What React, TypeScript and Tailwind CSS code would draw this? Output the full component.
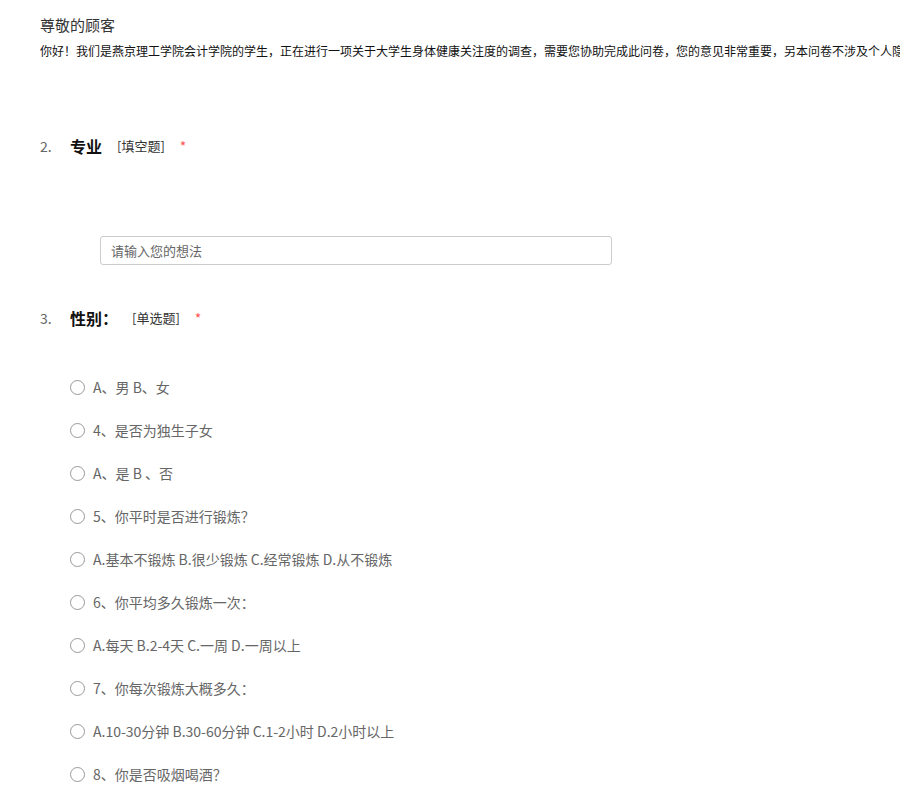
import React from 'react';

const font = { fontFamily: '"Microsoft YaHei", "Noto Sans CJK SC", "Noto Sans", sans-serif' };

const options = [
  'A、男 B、女',
  '4、是否为独生子女',
  'A、是 B 、否',
  '5、你平时是否进行锻炼？',
  'A.基本不锻炼 B.很少锻炼 C.经常锻炼 D.从不锻炼',
  '6、你平均多久锻炼一次：',
  'A.每天 B.2-4天 C.一周 D.一周以上',
  '7、你每次锻炼大概多久：',
  'A.10-30分钟 B.30-60分钟 C.1-2小时 D.2小时以上',
  '8、你是否吸烟喝酒？',
];

const QuestionTitle: React.FC<{ num: string; title: string; type: string; gap: string }> = ({ num, title, type, gap }) => (
  <div className="flex items-center h-[24px] leading-[24px]">
    <span className="w-[30px] text-[14px] text-[#666]">{num}</span>
    <span className="text-[16px] font-bold text-[#111]">{title}</span>
    <span className={`text-[13px] text-[#333] ${gap}`}>{type}</span>
    <span className="text-[14px] text-[#f55] ml-[15px]">*</span>
  </div>
);

export default function App() {
  return (
    <div className="w-[900px] h-[800px] overflow-hidden bg-white pl-[40px]" style={font}>
      <div className="pt-[15px] text-[15px] leading-[20px] text-[#333]">尊敬的顾客</div>
      <div className="mt-[6px] text-[12px] leading-[20px] text-[#111] whitespace-nowrap overflow-hidden">
        你好！我们是燕京理工学院会计学院的学生，正在进行一项关于大学生身体健康关注度的调查，需要您协助完成此问卷，您的意见非常重要，另本问卷不涉及个人隐私，请放心填写。谢谢！
      </div>

      <div className="mt-[73px]">
        <QuestionTitle num="2." title="专业" type="[填空题]" gap="ml-[15px]" />
      </div>
      <div className="mt-[78px] ml-[60px] w-[512px] h-[29px] border border-[#ccc] rounded-[3px] flex items-center px-[10px] text-[13px] text-[#666]">
        请输入您的想法
      </div>

      <div className="mt-[41px]">
        <QuestionTitle num="3." title="性别：" type="[单选题]" gap="ml-[14px]" />
      </div>

      <div className="mt-[47px] ml-[30px] flex flex-col gap-[23px]">
        {options.map((o) => (
          <div key={o} className="flex items-center h-[20px]">
            <span className="w-[15px] h-[15px] rounded-full border border-[#999] bg-white" />
            <span className="ml-[8px] text-[14px] leading-[20px] text-[#666]">{o}</span>
          </div>
        ))}
      </div>
    </div>
  );
}
